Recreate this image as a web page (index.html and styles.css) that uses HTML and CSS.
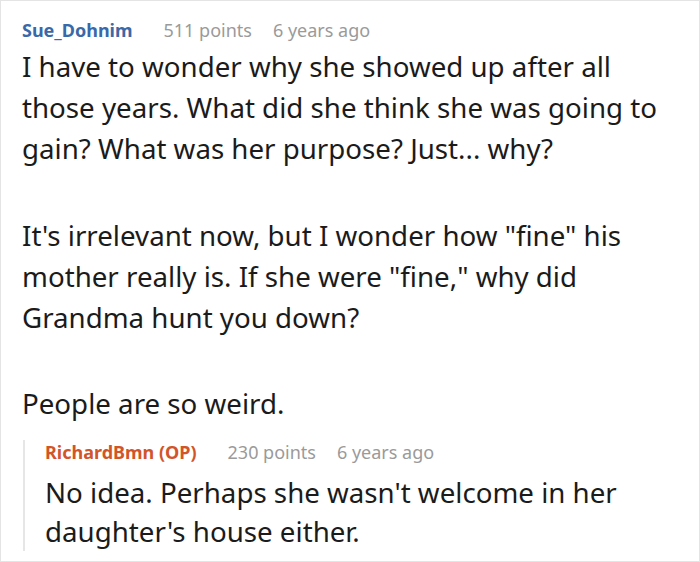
FILE: index.html
```html
<!DOCTYPE html>
<html>
<head>
<meta charset="utf-8">
<link rel="stylesheet" href="styles.css">
</head>
<body>
<div class="card">
  <div class="meta">
    <span class="author">Sue_Dohnim</span>
    <span class="points">511 points</span>
    <span class="time">6 years ago</span>
  </div>
  <div class="text">
    <p>I have to wonder why she showed up after all those years. What did she think she was going to gain? What was her purpose? Just... why?</p>
    <p class="p2">It's irrelevant now, but I wonder how "fine" his mother really is. If she were "fine," why did Grandma hunt you down?</p>
    <p class="p3">People are so weird.</p>
  </div>
  <div class="reply">
    <div class="meta reply-meta">
      <span class="author op">RichardBmn (OP)</span>
      <span class="points">230 points</span>
      <span class="time">6 years ago</span>
    </div>
    <div class="text reply-text">
      <p>No idea. Perhaps she wasn't welcome in her daughter's house either.</p>
    </div>
  </div>
</div>
</body>
</html>
```

FILE: styles.css
```css
html, body {
  margin: 0;
  padding: 0;
  background: #ffffff;
}
.card {
  box-sizing: border-box;
  width: 700px;
  height: 562px;
  border: 1px solid #e4e4e4;
  padding: 17px 20px 0 21px;
  font-family: "Noto Sans", "Open Sans", sans-serif;
  overflow: hidden;
}
.meta {
  display: flex;
  align-items: baseline;
  font-size: 18px;
  line-height: 24px;
  white-space: nowrap;
}
.author {
  font-weight: bold;
  color: #3a68a8;
}
.author.op {
  color: #d2552a;
}
.points {
  color: #9a9a9a;
  margin-left: 31px;
}
.time {
  color: #9a9a9a;
  margin-left: 21px;
}
.text {
  margin-top: 4px;
  color: #1b1b1b;
  font-size: 27.7px;
  line-height: 41px;
}
.text p {
  margin: 0;
}
.text .p2 {
  margin-top: 46px;
}
.text .p3 {
  margin-top: 45px;
}
.reply {
  margin-top: 29px;
  border-left: 2px solid #e6e6e6;
  padding-left: 20px;
  margin-left: 1px;
}
.reply-meta {
  margin-top: -13px;
}
.reply-text {
  margin-top: 9px;
  line-height: 39px;
}
.reply-text p {
  margin-bottom: -7px;
}
```
